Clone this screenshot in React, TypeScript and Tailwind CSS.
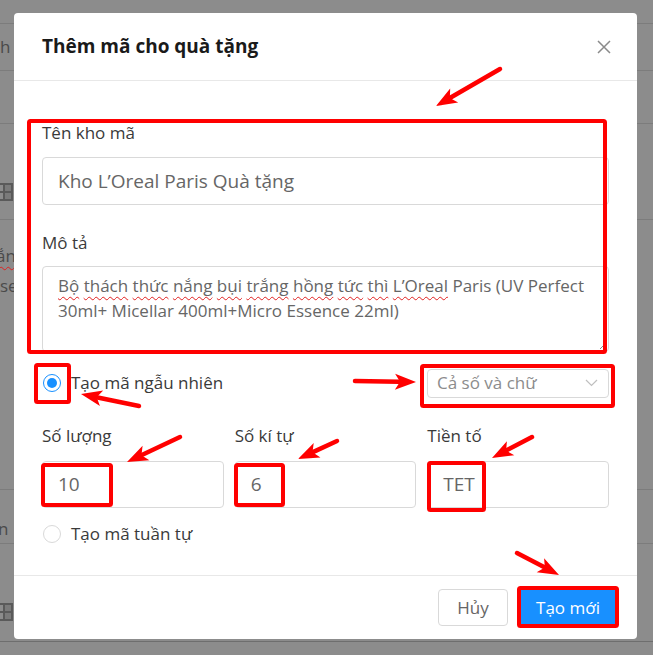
import React from "react"

const arrows = [
    { x1: 500, y1: 69, x2: 436, y2: 106 },
    { x1: 139, y1: 406, x2: 81, y2: 394 },
    { x1: 355, y1: 381, x2: 416, y2: 382 },
    { x1: 180, y1: 437, x2: 127, y2: 462 },
    { x1: 337, y1: 441, x2: 298, y2: 459 },
    { x1: 532, y1: 437, x2: 492, y2: 458 },
    { x1: 517, y1: 553, x2: 559, y2: 575 },
]

// outer edges of the red marker boxes: left, top, right, bottom
const boxes = [
    [27, 119, 607, 354],
    [34, 363, 71, 404],
    [420, 364, 615, 408],
    [41, 463, 113, 507],
    [234, 463, 285, 507],
    [427, 461, 486, 512],
    [517, 586, 619, 628],
]

const Annotations = () => (
    <svg className="pointer-events-none absolute left-0 top-0" width="653" height="655">
        {boxes.map(([l, t, r, b], i) => (
            <rect key={i} x={l + 2} y={t + 2} width={r - l - 4} height={b - t - 4} rx="1.5" fill="none" stroke="#ff0000" strokeWidth="4" />
        ))}
        {arrows.map((a, i) => {
            const dx = a.x2 - a.x1
            const dy = a.y2 - a.y1
            const len = Math.hypot(dx, dy)
            const ux = dx / len
            const uy = dy / len
            const head = 21
            const bx = a.x2 - ux * head
            const by = a.y2 - uy * head
            const nx = -uy * 8
            const ny = ux * 8
            return (
                <g key={i}>
                    <line x1={a.x1} y1={a.y1} x2={bx + ux * 4} y2={by + uy * 4} stroke="#ff0000" strokeWidth="4.5" strokeLinecap="round" />
                    <polygon
                        points={`${a.x2},${a.y2} ${bx + nx},${by + ny} ${bx + ux * 5},${by + uy * 5} ${bx - nx},${by - ny}`}
                        fill="#ff0000"
                    />
                </g>
            )
        })}
    </svg>
)

const Wavy = ({ children }: { children: React.ReactNode }) => (
    <span className="underline decoration-wavy decoration-[#e02020] decoration-1 underline-offset-[4px]">{children}</span>
)

const GridIcon = () => (
    <svg width="20" height="20" viewBox="0 0 20 20" className="-ml-[6px]">
        <rect x="1" y="1" width="18" height="18" fill="#5a5a5a" />
        <rect x="3" y="3" width="6" height="6" fill="#8c8c8c" />
        <rect x="11" y="3" width="6" height="6" fill="#7a7a7a" />
        <rect x="3" y="11" width="6" height="6" fill="#8c8c8c" />
        <rect x="11" y="11" width="6" height="6" fill="#7a7a7a" />
    </svg>
)

const BackgroundPage = () => (
    <div className="flex flex-col text-[17px] text-[#4a4a4a]">
        <div className="h-[24px] border-b border-[#7c7c7c]" />
        <div className="flex h-[47px] items-center border-b border-[#7c7c7c]">
            <span>h</span>
        </div>
        <div className="h-[53px] border-b border-[#7c7c7c]" />
        <div className="flex h-[96px] items-end pb-[17px] border-b border-[#7c7c7c]">
            <GridIcon />
        </div>
        <div className="flex h-[270px] flex-col border-b border-[#7c7c7c] pt-[21px] leading-[30px]">
            <span className="-ml-[4px]"><Wavy>ắn</Wavy></span>
            <span>se</span>
        </div>
        <div className="flex h-[54px] items-center border-b border-[#7c7c7c] pt-[24px]">
            <span className="-ml-[2px]">n</span>
        </div>
        <div className="flex h-[98px] items-start pt-[58px] border-b border-[#6e6e6e]">
            <GridIcon />
        </div>
    </div>
)

const Radio = ({ checked }: { checked?: boolean }) => (
    <span
        className={
            checked
                ? "flex h-[18px] w-[18px] items-center justify-center rounded-full border border-[#1890ff] bg-white"
                : "flex h-[18px] w-[18px] items-center justify-center rounded-full border border-[#d9d9d9] bg-white"
        }
    >
        {checked && <span className="h-[10px] w-[10px] rounded-full bg-[#1890ff]" />}
    </span>
)

const Modal = () => (
    <div className="absolute left-[14px] top-[13px] flex h-[626px] w-[623px] flex-col rounded-[4px] bg-white text-[#3a3a3a]">
        <div className="flex h-[68px] items-center justify-between border-b border-[#e8e8e8] pl-[28px] pr-[25px]">
            <h2 className="text-[19px] font-bold text-[#1a1a1a]">Thêm mã cho quà tặng</h2>
            <svg width="16" height="16" viewBox="0 0 16 16">
                <path d="M2 2 L14 14 M14 2 L2 14" stroke="#8a8a8a" strokeWidth="1.5" />
            </svg>
        </div>

        <div className="flex flex-1 flex-col px-[28px] pt-[40px]">
            <label className="text-[17px] leading-[24px]">Tên kho mã</label>
            <div className="mt-[12px] flex h-[48px] items-center rounded-[4px] border border-[#d9d9d9] px-[15px] text-[19px] text-[#666]">
                Kho L’Oreal Paris Quà tặng
            </div>

            <label className="mt-[26px] text-[17px] leading-[24px]">Mô tả</label>
            <div className="relative mt-[11px] h-[86px] rounded-[4px] border border-[#d9d9d9] pl-[15px] pr-[8px] pt-[6px] text-[17px] leading-[25px] text-[#666]">
                <Wavy>Bộ</Wavy> <Wavy>thách</Wavy> <Wavy>thức</Wavy> <Wavy>nắng</Wavy> <Wavy>bụi</Wavy> <Wavy>trắng</Wavy>{" "}
                <Wavy>hồng</Wavy> <Wavy>tức</Wavy> <Wavy>thì</Wavy> <Wavy>L’Oreal</Wavy> Paris (UV Perfect 30ml+ Micellar
                400ml+Micro Essence 22ml)
                <svg className="absolute bottom-[1px] right-[1px]" width="8" height="8" viewBox="0 0 8 8">
                    <path d="M1 7 L7 1 M4 7 L7 4" stroke="#888" strokeWidth="1" />
                </svg>
            </div>

            <div className="mt-[16px] flex h-[30px] items-center justify-between">
                <div className="flex items-center gap-[10px] pl-[1px]">
                    <Radio checked />
                    <span className="text-[17px]">Tạo mã ngẫu nhiên</span>
                </div>
                <div className="flex h-[29px] w-[182px] items-center justify-between rounded-[4px] border border-[#d9d9d9] pl-[9px] pr-[10px] text-[17px] text-[#8c8c8c]">
                    <span>Cả số và chữ</span>
                    <svg width="13" height="8" viewBox="0 0 13 8">
                        <path d="M1 1 L6.5 6.5 L12 1" fill="none" stroke="#bfbfbf" strokeWidth="1.2" />
                    </svg>
                </div>
            </div>

            <div className="mt-[26px] grid grid-cols-3 gap-x-[11px]">
                {[
                    ["Số lượng", "10"],
                    ["Số kí tự", "6"],
                    ["Tiền tố", "TET"],
                ].map(([label, value]) => (
                    <div key={label} className="flex flex-col">
                        <label className="text-[17px] leading-[24px]">{label}</label>
                        <div className="mt-[13px] flex h-[47px] items-center rounded-[4px] border border-[#d9d9d9] px-[15px] text-[19px] text-[#666]">
                            {value}
                        </div>
                    </div>
                ))}
            </div>

            <div className="mt-[14px] flex h-[24px] items-center gap-[10px] pl-[1px]">
                <Radio />
                <span className="text-[17px]">Tạo mã tuần tự</span>
            </div>
        </div>

        <div className="flex h-[64px] items-center justify-end gap-[12px] border-t border-[#e8e8e8] pr-[21px]">
            <button className="h-[37px] w-[70px] rounded-[4px] border border-[#d9d9d9] bg-white text-[17px] text-[#666]">Hủy</button>
            <button className="h-[37px] w-[96px] rounded-[4px] bg-[#1890ff] text-[17px] text-white">Tạo mới</button>
        </div>
    </div>
)

export default function App() {
    return (
        <div className="relative h-[655px] w-[653px] overflow-hidden bg-[#8c8c8c] font-['Open_Sans','Noto_Sans',sans-serif]">
            <BackgroundPage />
            <Modal />
            <Annotations />
        </div>
    )
}
